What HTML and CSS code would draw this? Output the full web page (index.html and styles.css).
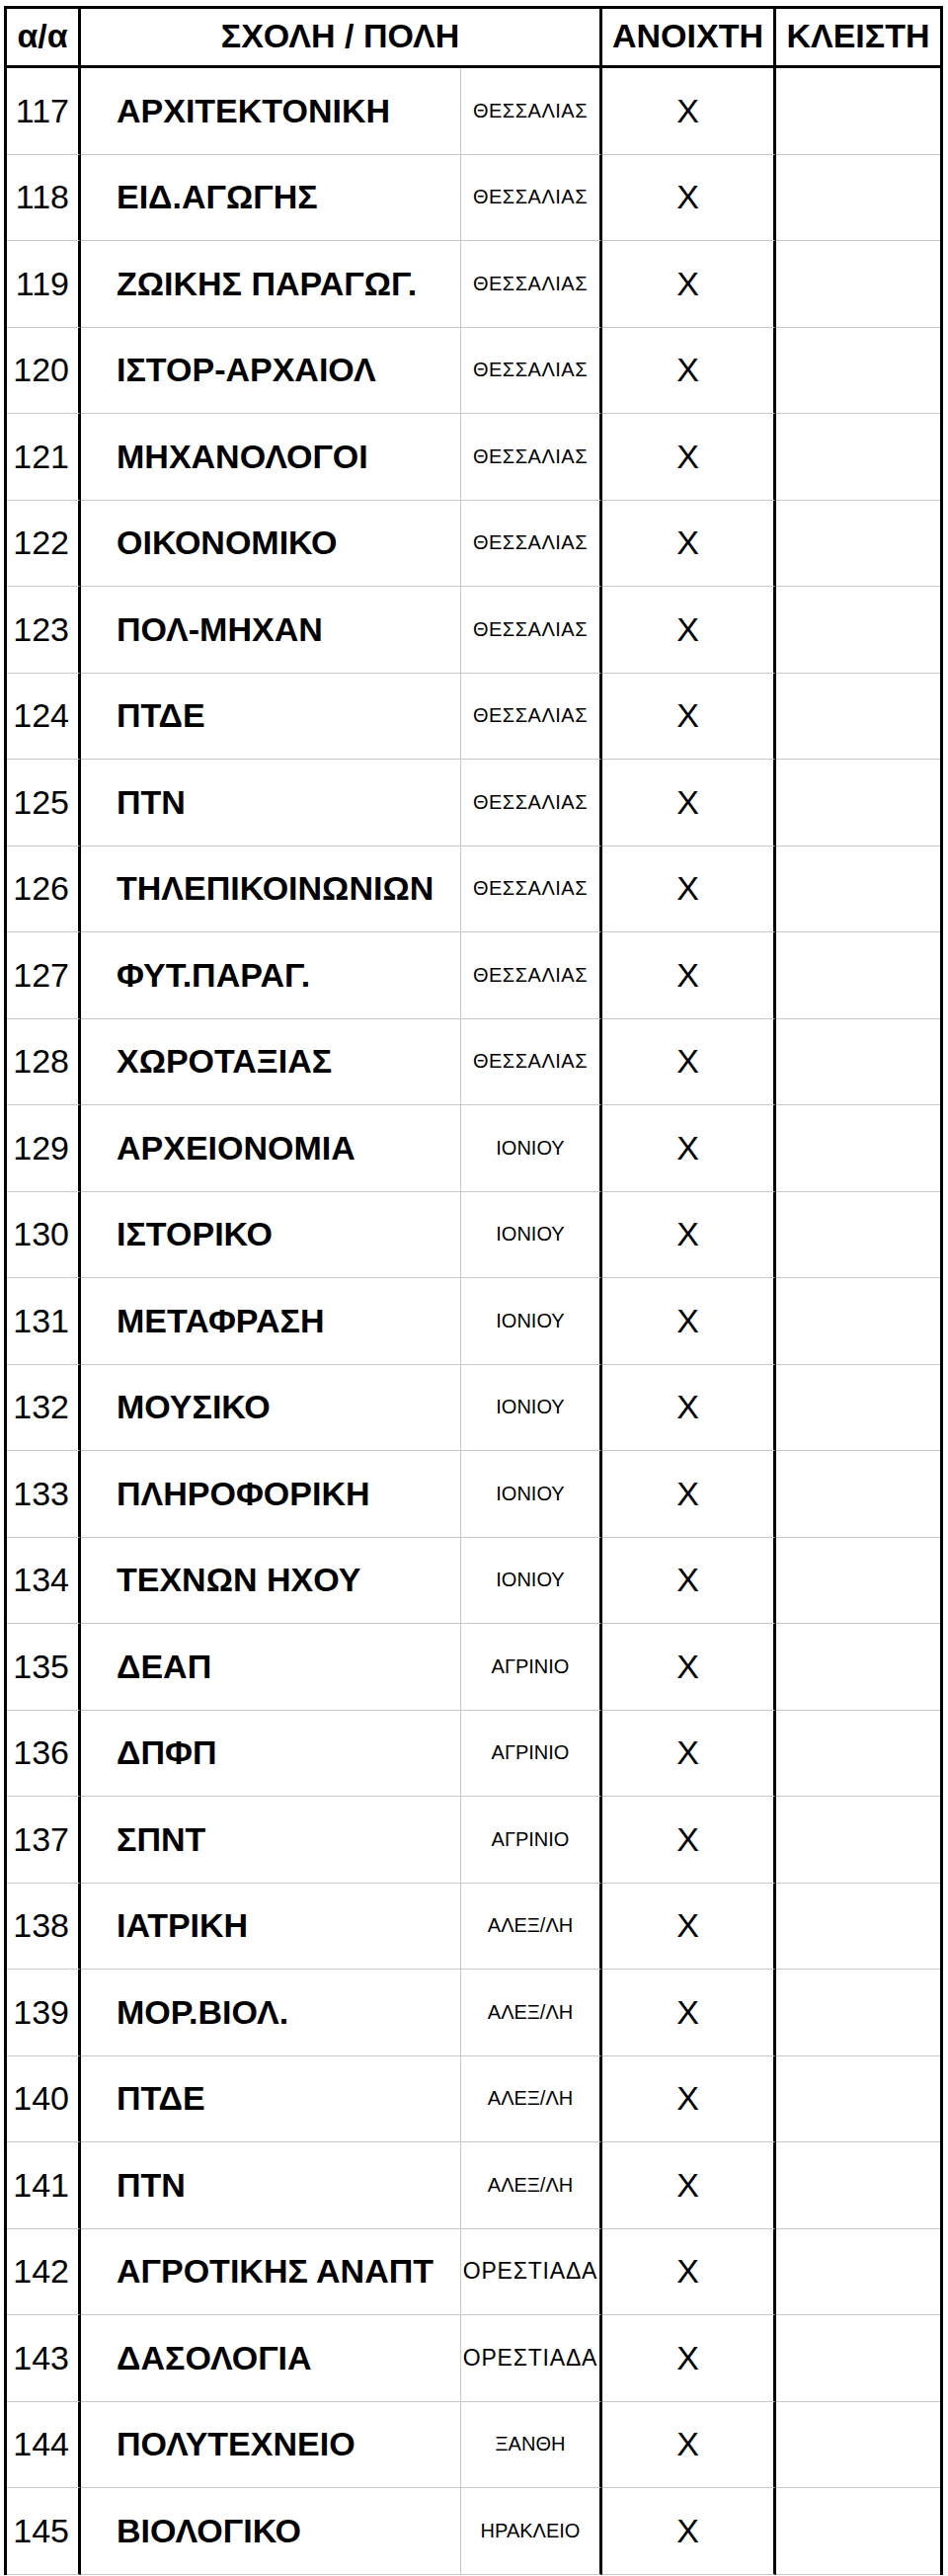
FILE: index.html
```html
<!DOCTYPE html>
<html lang="el">
<head>
<meta charset="utf-8">
<title>Σχολές</title>
<link rel="stylesheet" href="styles.css">
</head>
<body>
<div class="sheet">
  <div class="h num-h">α/α</div>
  <div class="h school-h">ΣΧΟΛΗ / ΠΟΛΗ</div>
  <div class="h open-h">ΑΝΟΙΧΤΗ</div>
  <div class="h closed-h">ΚΛΕΙΣΤΗ</div>

  <div class="c num">117</div><div class="c school">ΑΡΧΙΤΕΚΤΟΝΙΚΗ</div><div class="c city thes">ΘΕΣΣΑΛΙΑΣ</div><div class="c open">X</div><div class="c closed"></div>
  <div class="c num">118</div><div class="c school">ΕΙΔ.ΑΓΩΓΗΣ</div><div class="c city thes">ΘΕΣΣΑΛΙΑΣ</div><div class="c open">X</div><div class="c closed"></div>
  <div class="c num">119</div><div class="c school">ΖΩΙΚΗΣ ΠΑΡΑΓΩΓ.</div><div class="c city thes">ΘΕΣΣΑΛΙΑΣ</div><div class="c open">X</div><div class="c closed"></div>
  <div class="c num">120</div><div class="c school">ΙΣΤΟΡ-ΑΡΧΑΙΟΛ</div><div class="c city thes">ΘΕΣΣΑΛΙΑΣ</div><div class="c open">X</div><div class="c closed"></div>
  <div class="c num">121</div><div class="c school">ΜΗΧΑΝΟΛΟΓΟΙ</div><div class="c city thes">ΘΕΣΣΑΛΙΑΣ</div><div class="c open">X</div><div class="c closed"></div>
  <div class="c num">122</div><div class="c school">ΟΙΚΟΝΟΜΙΚΟ</div><div class="c city thes">ΘΕΣΣΑΛΙΑΣ</div><div class="c open">X</div><div class="c closed"></div>
  <div class="c num">123</div><div class="c school">ΠΟΛ-ΜΗΧΑΝ</div><div class="c city thes">ΘΕΣΣΑΛΙΑΣ</div><div class="c open">X</div><div class="c closed"></div>
  <div class="c num">124</div><div class="c school">ΠΤΔΕ</div><div class="c city thes">ΘΕΣΣΑΛΙΑΣ</div><div class="c open">X</div><div class="c closed"></div>
  <div class="c num">125</div><div class="c school">ΠΤΝ</div><div class="c city thes">ΘΕΣΣΑΛΙΑΣ</div><div class="c open">X</div><div class="c closed"></div>
  <div class="c num">126</div><div class="c school">ΤΗΛΕΠΙΚΟΙΝΩΝΙΩΝ</div><div class="c city thes">ΘΕΣΣΑΛΙΑΣ</div><div class="c open">X</div><div class="c closed"></div>
  <div class="c num">127</div><div class="c school">ΦΥΤ.ΠΑΡΑΓ.</div><div class="c city thes">ΘΕΣΣΑΛΙΑΣ</div><div class="c open">X</div><div class="c closed"></div>
  <div class="c num">128</div><div class="c school">ΧΩΡΟΤΑΞΙΑΣ</div><div class="c city thes">ΘΕΣΣΑΛΙΑΣ</div><div class="c open">X</div><div class="c closed"></div>
  <div class="c num">129</div><div class="c school">ΑΡΧΕΙΟΝΟΜΙΑ</div><div class="c city">ΙΟΝΙΟΥ</div><div class="c open">X</div><div class="c closed"></div>
  <div class="c num">130</div><div class="c school">ΙΣΤΟΡΙΚΟ</div><div class="c city">ΙΟΝΙΟΥ</div><div class="c open">X</div><div class="c closed"></div>
  <div class="c num">131</div><div class="c school">ΜΕΤΑΦΡΑΣΗ</div><div class="c city">ΙΟΝΙΟΥ</div><div class="c open">X</div><div class="c closed"></div>
  <div class="c num">132</div><div class="c school">ΜΟΥΣΙΚΟ</div><div class="c city">ΙΟΝΙΟΥ</div><div class="c open">X</div><div class="c closed"></div>
  <div class="c num">133</div><div class="c school">ΠΛΗΡΟΦΟΡΙΚΗ</div><div class="c city">ΙΟΝΙΟΥ</div><div class="c open">X</div><div class="c closed"></div>
  <div class="c num">134</div><div class="c school">ΤΕΧΝΩΝ ΗΧΟΥ</div><div class="c city">ΙΟΝΙΟΥ</div><div class="c open">X</div><div class="c closed"></div>
  <div class="c num">135</div><div class="c school">ΔΕΑΠ</div><div class="c city">ΑΓΡΙΝΙΟ</div><div class="c open">X</div><div class="c closed"></div>
  <div class="c num">136</div><div class="c school">ΔΠΦΠ</div><div class="c city">ΑΓΡΙΝΙΟ</div><div class="c open">X</div><div class="c closed"></div>
  <div class="c num">137</div><div class="c school">ΣΠΝΤ</div><div class="c city">ΑΓΡΙΝΙΟ</div><div class="c open">X</div><div class="c closed"></div>
  <div class="c num">138</div><div class="c school">ΙΑΤΡΙΚΗ</div><div class="c city">ΑΛΕΞ/ΛΗ</div><div class="c open">X</div><div class="c closed"></div>
  <div class="c num">139</div><div class="c school">ΜΟΡ.ΒΙΟΛ.</div><div class="c city">ΑΛΕΞ/ΛΗ</div><div class="c open">X</div><div class="c closed"></div>
  <div class="c num">140</div><div class="c school">ΠΤΔΕ</div><div class="c city">ΑΛΕΞ/ΛΗ</div><div class="c open">X</div><div class="c closed"></div>
  <div class="c num">141</div><div class="c school">ΠΤΝ</div><div class="c city">ΑΛΕΞ/ΛΗ</div><div class="c open">X</div><div class="c closed"></div>
  <div class="c num">142</div><div class="c school">ΑΓΡΟΤΙΚΗΣ ΑΝΑΠΤ</div><div class="c city wide">ΟΡΕΣΤΙΑΔΑ</div><div class="c open">X</div><div class="c closed"></div>
  <div class="c num">143</div><div class="c school">ΔΑΣΟΛΟΓΙΑ</div><div class="c city wide">ΟΡΕΣΤΙΑΔΑ</div><div class="c open">X</div><div class="c closed"></div>
  <div class="c num">144</div><div class="c school">ΠΟΛΥΤΕΧΝΕΙΟ</div><div class="c city">ΞΑΝΘΗ</div><div class="c open">X</div><div class="c closed"></div>
  <div class="c num">145</div><div class="c school">ΒΙΟΛΟΓΙΚΟ</div><div class="c city">ΗΡΑΚΛΕΙΟ</div><div class="c open">X</div><div class="c closed"></div>
</div>
</body>
</html>
```

FILE: styles.css
```css
html, body {
  margin: 0;
  padding: 0;
  background: #ffffff;
}

body {
  font-family: "Liberation Sans", Arial, sans-serif;
  color: #000000;
}

.sheet {
  display: grid;
  grid-template-columns: 75px 385px 143px 176px 166px;
  grid-template-rows: 60px;
  grid-auto-rows: 87.5px;
  width: 945px;
  margin: 6px 0 0 4px;
  border-top: 3px solid #000;
  border-left: 3px solid #000;
  border-right: 3px solid #000;
}

.h,
.c {
  box-sizing: border-box;
  display: flex;
  align-items: center;
  white-space: nowrap;
  overflow: visible;
}

.h {
  font-weight: bold;
  font-size: 34px;
  justify-content: center;
  border-bottom: 3px solid #000;
  padding-bottom: 2px;
}

.num-h {
  border-right: 3px solid #000;
}

.school-h {
  grid-column: span 2;
  border-right: 3px solid #000;
}

.open-h {
  border-right: 3px solid #000;
}

.c {
  border-bottom: 1px solid #c8c8c8;
}

.num {
  font-size: 34px;
  justify-content: flex-end;
  padding-right: 9px;
  border-right: 3px solid #000;
}

.school {
  font-size: 34px;
  font-weight: bold;
  padding-left: 36px;
  border-right: 1px solid #c8c8c8;
}

.city {
  font-size: 20px;
  justify-content: center;
  border-right: 3px solid #000;
}

.thes {
  letter-spacing: 0.5px;
}

.wide {
  font-size: 23px;
  letter-spacing: 0.8px;
}

.open {
  font-size: 34px;
  justify-content: center;
  border-right: 3px solid #000;
}

.closed {
  justify-content: center;
}
```
